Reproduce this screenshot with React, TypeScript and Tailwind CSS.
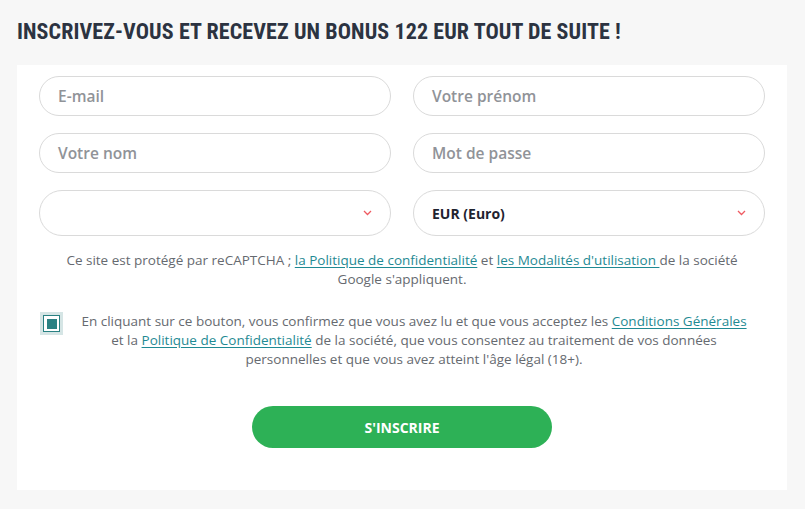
import React from "react";

const Chevron = () => (
  <svg width="9" height="6" viewBox="0 0 9 6" className="shrink-0">
    <path d="M1 1 L4.5 4.5 L8 1" fill="none" stroke="#ef5b62" strokeWidth="1.3" />
  </svg>
);

const Input = ({ placeholder }: { placeholder: string }) => (
  <div className="h-[40px] rounded-full border border-[#dadada] bg-white flex items-center pl-[18px] pt-[2px] text-[15.5px] font-semibold text-[#909398]">
    {placeholder}
  </div>
);

const Select = ({ value }: { value?: string }) => (
  <div className="h-[46px] rounded-full border border-[#dadada] bg-white flex items-center justify-between pl-[18px] pr-[18px] text-[14px] font-bold text-[#1f2430]">
    <span>{value ?? ""}</span>
    <Chevron />
  </div>
);

const A = ({ children }: { children: React.ReactNode }) => (
  <a className="text-[#1f8a93] underline underline-offset-2 decoration-[#1f8a93]">{children}</a>
);

export default function App() {
  return (
    <div className="w-[805px] h-[509px] bg-[#f7f7f7] overflow-hidden" style={{ fontFamily: '"Open Sans", sans-serif' }}>
      <div className="pl-[17px] pr-[18px] pt-[18px]">
        <h1
          className="text-[22px] leading-[28px] font-bold text-[#2c3341] tracking-[0.1px] whitespace-nowrap"
          style={{ fontFamily: '"Roboto Condensed", "Liberation Sans Narrow", Roboto, sans-serif' }}
        >
          INSCRIVEZ-VOUS ET RECEVEZ UN BONUS 122 EUR TOUT DE SUITE !
        </h1>
        <div className="mt-[19px] bg-white px-[22px] pt-[11px] pb-[42px]">
          <div className="grid grid-cols-2 gap-x-[22px] gap-y-[17px]">
            <Input placeholder="E-mail" />
            <Input placeholder="Votre prénom" />
            <Input placeholder="Votre nom" />
            <Input placeholder="Mot de passe" />
            <Select />
            <Select value="EUR (Euro)" />
          </div>
          <p className="mt-[15px] text-center text-[13.5px] leading-[19px] text-[#666a70] px-[20px]">
            Ce site est protégé par reCAPTCHA ; <A>la Politique de confidentialité</A> et <A>les Modalités d'utilisation </A>de la société Google s'appliquent.
          </p>
          <div className="mt-[23px] flex items-start">
            <div className="w-[23px] h-[23px] bg-[#d5e5e5] flex items-center justify-center shrink-0 ml-[1px]">
              <div className="w-[17px] h-[17px] bg-white border-[1.5px] border-[#2a8183] flex items-center justify-center">
                <div className="w-[10px] h-[10px] bg-[#2a8183]" />
              </div>
            </div>
            <p className="flex-1 text-center text-[13.5px] leading-[19px] text-[#666a70] px-[16px]">
              En cliquant sur ce bouton, vous confirmez que vous avez lu et que vous acceptez les <A>Conditions Générales</A> et la <A>Politique de Confidentialité</A> de la société, que vous consentez au traitement de vos données personnelles et que vous avez atteint l'âge légal (18+).
            </p>
          </div>
          <div className="mt-[37px] flex justify-center">
            <button className="w-[300px] h-[42px] rounded-full bg-[#2db156] text-white text-[14px] font-bold">
              S'INSCRIRE
            </button>
          </div>
        </div>
      </div>
    </div>
  );
}
